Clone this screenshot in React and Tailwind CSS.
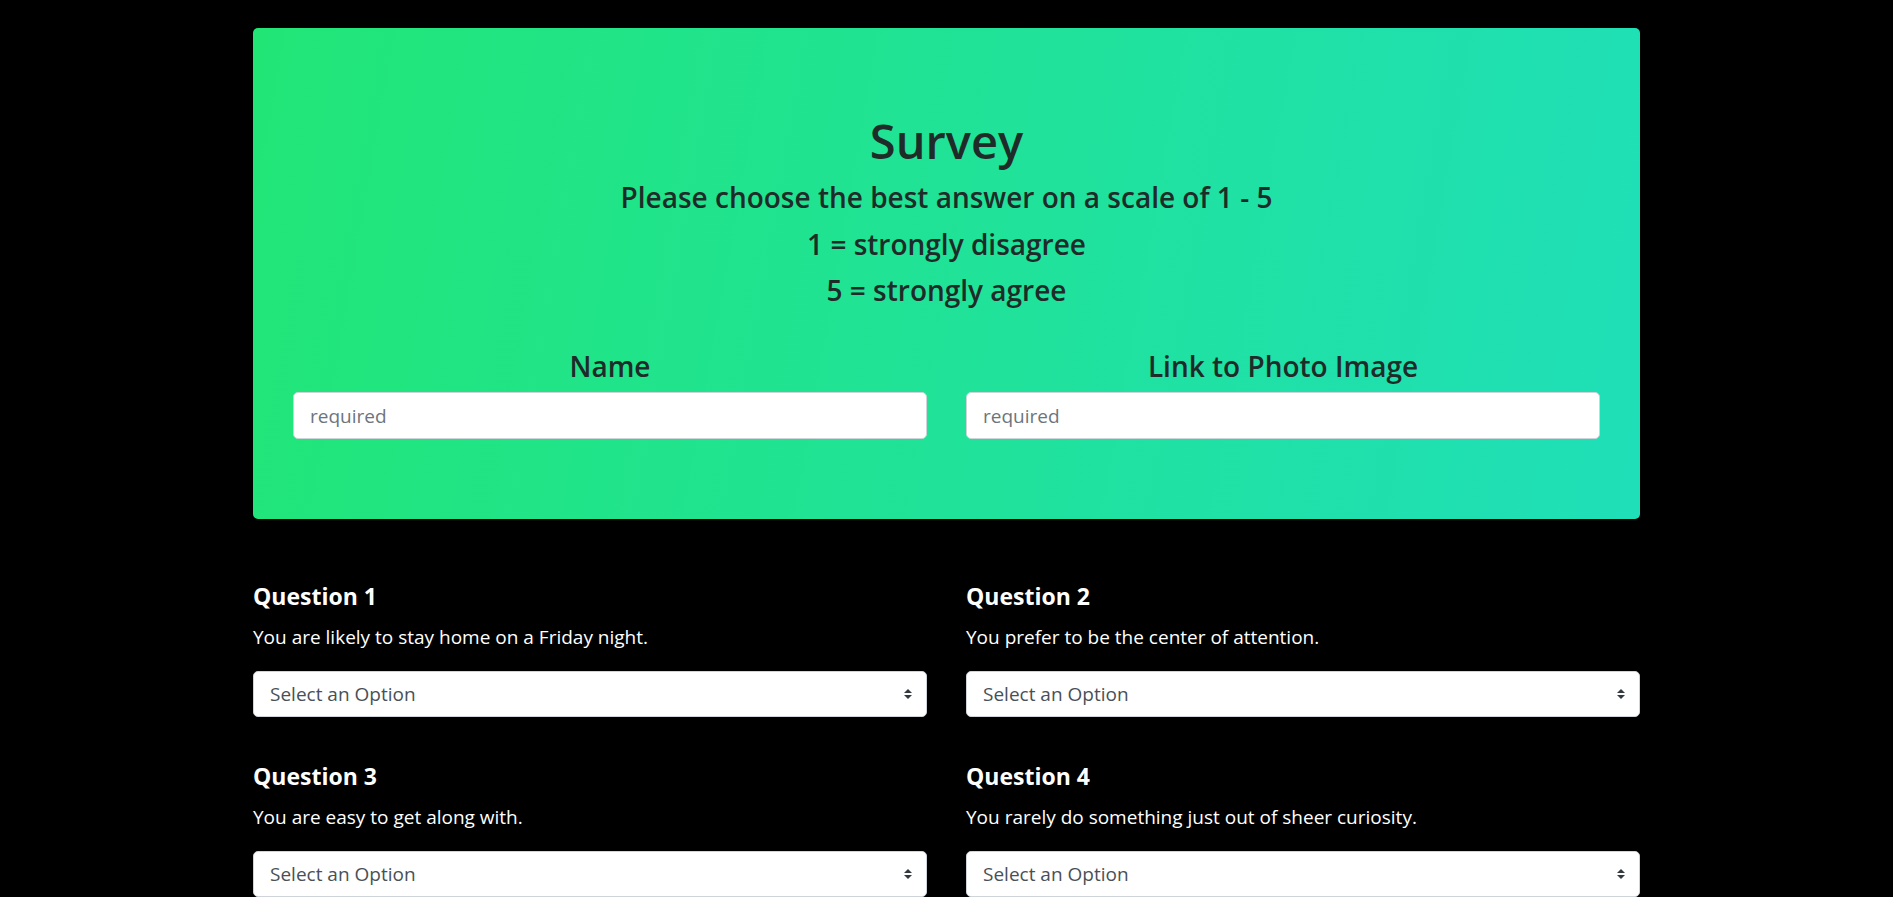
import React from "react";

const questions = [
  { id: 1, text: "You are likely to stay home on a Friday night." },
  { id: 2, text: "You prefer to be the center of attention." },
  { id: 3, text: "You are easy to get along with." },
  { id: 4, text: "You rarely do something just out of sheer curiosity." },
];

function SelectArrow() {
  return (
    <svg
      className="pointer-events-none absolute right-[15px] top-1/2 -translate-y-1/2"
      width="8"
      height="10"
      viewBox="0 0 4 5"
    >
      <path fill="#343a40" d="M2 0L0 2h4zm0 5L0 3h4z" />
    </svg>
  );
}

function Question({ id, text }) {
  return (
    <div className="flex flex-col">
      <h4 className="text-[23px] leading-[28px] font-bold text-white">Question {id}</h4>
      <p className="mt-[13.5px] text-[19px] leading-[28px] text-white">{text}</p>
      <div className="relative mt-[20px]">
        <select
          defaultValue=""
          className="h-[46px] w-full appearance-none rounded-[5px] border border-[#ced4da] bg-white pl-4 pr-10 text-[19px] text-[#495057] outline-none"
        >
          <option value="" disabled>
            Select an Option
          </option>
          <option value="1">1 (Strongly Disagree)</option>
          <option value="2">2</option>
          <option value="3">3</option>
          <option value="4">4</option>
          <option value="5">5 (Strongly Agree)</option>
        </select>
        <SelectArrow />
      </div>
    </div>
  );
}

export default function App() {
  return (
    <div className="h-screen overflow-hidden bg-black font-['Open_Sans',sans-serif]">
      <div className="mx-auto w-[1387px] pt-[28px]">
        {/* jumbotron */}
        <div className="rounded-[5px] bg-[linear-gradient(100deg,#21e676,#1fdfb9)] px-[40px] pt-[84px] pb-[80px] text-center text-[#1f2b28]">
          <h1 className="text-[47px] leading-[58px] font-semibold">Survey</h1>
          <div className="mt-[4px] text-[28px] leading-[46.5px] font-semibold">
            <h2>Please choose the best answer on a scale of 1 - 5</h2>
            <h2>1 = strongly disagree</h2>
            <h2>5 = strongly agree</h2>
          </div>

          <div className="mt-[35px] grid grid-cols-2 gap-x-[39px]">
            <div>
              <label className="block text-[28px] leading-[35px] font-semibold">Name</label>
              <input
                placeholder="required"
                className="mt-[8.5px] h-[47px] w-full rounded-[5px] border border-[#ced4da] bg-white px-4 text-[19px] text-[#495057] outline-none placeholder:text-[#6c757d]"
              />
            </div>
            <div>
              <label className="block text-[28px] leading-[35px] font-semibold">Link to Photo Image</label>
              <input
                placeholder="required"
                className="mt-[8.5px] h-[47px] w-full rounded-[5px] border border-[#ced4da] bg-white px-4 text-[19px] text-[#495057] outline-none placeholder:text-[#6c757d]"
              />
            </div>
          </div>
        </div>

        {/* questions */}
        <div className="mt-[62.5px] grid grid-cols-2 gap-x-[39px] gap-y-[44.5px]">
          {questions.map((q) => (
            <Question key={q.id} {...q} />
          ))}
        </div>
      </div>
    </div>
  );
}
